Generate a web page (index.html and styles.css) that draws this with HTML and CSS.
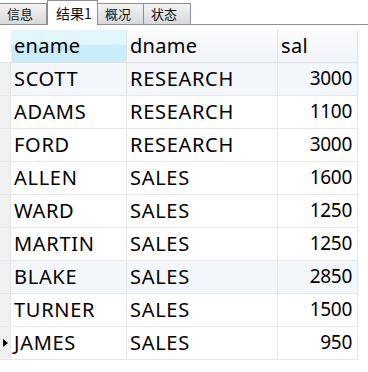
FILE: index.html
```html
<!DOCTYPE html>
<html>
<head>
<meta charset="utf-8">
<link rel="stylesheet" href="styles.css">
</head>
<body>
<div class="tabbar">
  <div class="tab">信息</div>
  <div class="tab active">结果1</div>
  <div class="tab">概况</div>
  <div class="tab">状态</div>
</div>
<div class="grid">
  <div class="ind head"></div>
  <div class="hc sorted">ename</div>
  <div class="hc">dname</div>
  <div class="hc">sal</div>

  <div class="ind"></div><div class="c alt">SCOTT</div><div class="c alt">RESEARCH</div><div class="c num alt">3000</div>
  <div class="ind"></div><div class="c">ADAMS</div><div class="c">RESEARCH</div><div class="c num">1100</div>
  <div class="ind"></div><div class="c">FORD</div><div class="c">RESEARCH</div><div class="c num">3000</div>
  <div class="ind"></div><div class="c">ALLEN</div><div class="c">SALES</div><div class="c num">1600</div>
  <div class="ind"></div><div class="c">WARD</div><div class="c">SALES</div><div class="c num">1250</div>
  <div class="ind"></div><div class="c">MARTIN</div><div class="c">SALES</div><div class="c num">1250</div>
  <div class="ind"></div><div class="c alt">BLAKE</div><div class="c alt">SALES</div><div class="c num alt">2850</div>
  <div class="ind"></div><div class="c">TURNER</div><div class="c">SALES</div><div class="c num">1500</div>
  <div class="ind cur"><span class="arrow"></span></div><div class="c">JAMES</div><div class="c">SALES</div><div class="c num">950</div>
</div>
</body>
</html>
```
FILE: styles.css
```css
html, body { margin: 0; padding: 0; background: #fff; }
body { width: 368px; height: 372px; overflow: hidden; }

.tabbar {
  display: flex;
  align-items: flex-end;
  height: 24px;
  border-bottom: 1px solid #8d8f94;
  padding-left: 0;
}
.tab {
  box-sizing: border-box;
  height: 21px;
  width: 47px;
  border: 1px solid #8d8f94;
  border-bottom: none;
  border-left: none;
  background: linear-gradient(#f3f3f3, #e6e6e6 50%, #d9d9d9);
  font-family: "Noto Sans CJK SC", sans-serif;
  font-size: 13px;
  line-height: 20px;
  color: #111;
  padding-left: 7px;
}
.tab:first-child { border-left: none; }
.tab.active {
  height: 25px;
  width: 51px;
  margin-bottom: -1px;
  background: #fff;
  border-left: 1px solid #8d8f94;
  margin-left: 0;
  padding-left: 8px;
  line-height: 24px;
  font-size: 14px;
}
.tab.active + .tab { width: 46px; }

.grid {
  margin-top: 5px;
  display: grid;
  grid-template-columns: 11px 116px 151px 80px;
  grid-auto-rows: 33px;
  width: 358px;
  font-family: "Noto Sans", "Open Sans", sans-serif;
  font-size: 20px;
  letter-spacing: 0.7px;
  color: #000;
}
.grid > div {
  box-sizing: border-box;
  border-right: 1px solid #e6e6e6;
  border-bottom: 1px solid #e6e6e6;
  line-height: 31px;
  white-space: nowrap;
  overflow: hidden;
}
.ind { background: #f0f0f0; position: relative; }
.ind.head { background: #fff; border-right: none !important; }
.hc {
  background: linear-gradient(#fafbfd, #f1f4f8);
  padding-left: 3px;
  letter-spacing: 0.3px;
  border-right-color: #e0e3e7 !important;
  border-bottom-color: #dfe2e6 !important;
}
.hc.sorted {
  background: linear-gradient(#e2f6fd 0%, #e2f6fd 45%, #c9edfb 46%, #c9edfb 100%);
}
.c { padding-left: 3px; }
.c.alt { background: #f3f7fc; }
.num {
  text-align: right;
  padding-right: 5px;
  padding-left: 0;
  font-size: 19px;
  letter-spacing: -0.3px;
}
.arrow {
  position: absolute;
  left: 3px;
  top: 12px;
  width: 0; height: 0;
  border-top: 4px solid transparent;
  border-bottom: 4px solid transparent;
  border-left: 5px solid #000;
}
```
